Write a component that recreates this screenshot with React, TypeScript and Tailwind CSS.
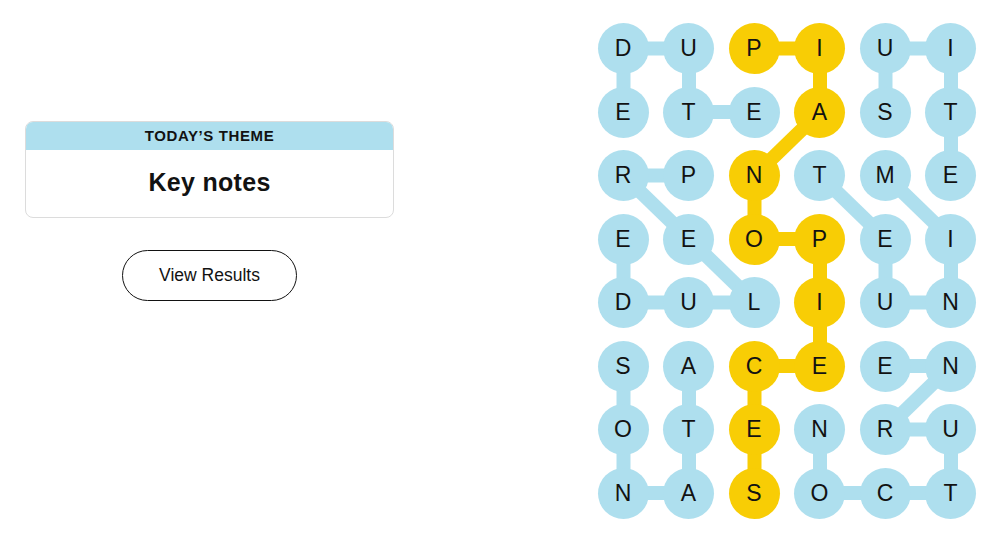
import React from "react";

const GRID = [
  "DUPIUI",
  "ETEAST",
  "RPNTME",
  "EEOPEI",
  "DULIUN",
  "SACEEN",
  "OTENRU",
  "NASOCT",
];

// yellow cells (spangram)
const YELLOW = new Set([
  "0,2", "0,3", "1,3", "2,2", "3,2", "3,3", "4,3", "5,3", "5,2", "6,2", "7,2",
]);

type Edge = [number, number, number, number];

const BLUE_EDGES: Edge[] = [
  // ETUDE
  [1, 2, 1, 1], [1, 1, 0, 1], [0, 1, 0, 0], [0, 0, 1, 0],
  // PRELUDE
  [2, 1, 2, 0], [2, 0, 3, 1], [3, 1, 4, 2], [4, 2, 4, 1], [4, 1, 4, 0], [4, 0, 3, 0],
  // SUITE
  [1, 4, 0, 4], [0, 4, 0, 5], [0, 5, 1, 5], [1, 5, 2, 5],
  // MINUET
  [2, 4, 3, 5], [3, 5, 4, 5], [4, 5, 4, 4], [4, 4, 3, 4], [3, 4, 2, 3],
  // NOCTURNE
  [6, 3, 7, 3], [7, 3, 7, 4], [7, 4, 7, 5], [7, 5, 6, 5], [6, 5, 6, 4], [6, 4, 5, 5], [5, 5, 5, 4],
  // SONATA
  [5, 0, 6, 0], [6, 0, 7, 0], [7, 0, 7, 1], [7, 1, 6, 1], [6, 1, 5, 1],
];

const YELLOW_EDGES: Edge[] = [
  [0, 2, 0, 3], [0, 3, 1, 3], [1, 3, 2, 2], [2, 2, 3, 2], [3, 2, 3, 3],
  [3, 3, 4, 3], [4, 3, 5, 3], [5, 3, 5, 2], [5, 2, 6, 2], [6, 2, 7, 2],
];

const D = 51;
const PX = 65.5;
const PY = 63.5;
const cx = (c: number) => D / 2 + c * PX;
const cy = (r: number) => D / 2 + r * PY;

const BLUE = "#aedfee";
const GOLD = "#f8cd05";

export default function App() {
  return (
    <div
      className="w-[1000px] h-[540px] bg-white flex text-black"
      style={{ fontFamily: '"Liberation Sans", Arial, sans-serif' }}
    >
      {/* Left column */}
      <div className="w-[394px] pl-[25px] pt-[121px] flex flex-col items-center">
        <div className="w-[369px] rounded-[8px] border border-[#dcdcdc] overflow-hidden">
          <div className="h-[28px] bg-[#aedfee] flex items-center justify-center text-[15px] font-bold tracking-[0.6px] text-[#121212]">
            TODAY’S THEME
          </div>
          <div className="h-[67px] pb-[2px] flex items-center justify-center text-[25px] font-bold tracking-[0.3px] text-[#121212]">
            Key notes
          </div>
        </div>
        <button className="mt-[32px] w-[175px] h-[51px] rounded-full border border-[#121212] bg-white text-[17.5px] text-[#121212] flex items-center justify-center">
          View Results
        </button>
      </div>

      {/* Board */}
      <div className="pl-[203.5px] pt-[23px]">
        <div className="relative w-[378.5px] h-[495.5px]">
          <svg
            className="absolute inset-0"
            width="378.5"
            height="495.5"
            viewBox="0 0 378.5 495.5"
          >
            {BLUE_EDGES.map(([r1, c1, r2, c2], i) => (
              <line
                key={"b" + i}
                x1={cx(c1)}
                y1={cy(r1)}
                x2={cx(c2)}
                y2={cy(r2)}
                stroke={BLUE}
                strokeWidth={14}
              />
            ))}
            {YELLOW_EDGES.map(([r1, c1, r2, c2], i) => (
              <line
                key={"y" + i}
                x1={cx(c1)}
                y1={cy(r1)}
                x2={cx(c2)}
                y2={cy(r2)}
                stroke={GOLD}
                strokeWidth={14}
              />
            ))}
          </svg>
          <div className="relative grid grid-cols-[repeat(6,51px)] grid-rows-[repeat(8,51px)] gap-x-[14.5px] gap-y-[12.5px]">
            {GRID.map((row, r) =>
              row.split("").map((ch, c) => (
                <div
                  key={r + "-" + c}
                  className={
                    "w-[51px] h-[51px] rounded-full flex items-center justify-center text-[23px] leading-none text-[#121212] " +
                    (YELLOW.has(r + "," + c) ? "bg-[#f8cd05]" : "bg-[#aedfee]")
                  }
                >
                  {ch}
                </div>
              ))
            )}
          </div>
        </div>
      </div>
    </div>
  );
}
